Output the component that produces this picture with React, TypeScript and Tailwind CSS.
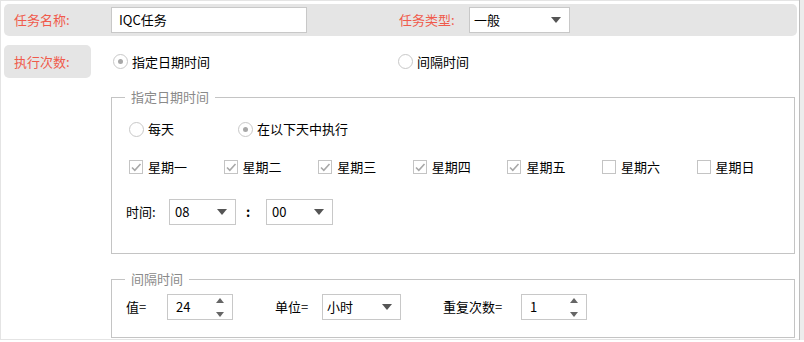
import React from "react";

const font = { fontFamily: '"Noto Sans CJK SC", "Noto Sans", sans-serif' };

function Caret() {
  return (
    <svg width="10" height="6" viewBox="0 0 10 6" className="shrink-0">
      <path d="M0 0h10L5 6z" fill="#555" />
    </svg>
  );
}

function Select({ value, w, pl = "pl-[4px]" }: { value: string; w: string; pl?: string }) {
  return (
    <div className={`${w} h-[26px] border border-[#c8c8c8] bg-white flex items-center justify-between ${pl} pr-[8px] text-black`}>
      <span>{value}</span>
      <Caret />
    </div>
  );
}

function Spinner({ value, w }: { value: string; w: string }) {
  return (
    <div className={`${w} h-[26px] border border-[#c8c8c8] bg-white flex items-center justify-between pl-[8px] pr-[8px] text-black`}>
      <span>{value}</span>
      <div className="flex flex-col gap-[9px]">
        <svg width="8" height="5" viewBox="0 0 8 5">
          <path d="M0 5h8L4 0z" fill="#666" />
        </svg>
        <svg width="8" height="5" viewBox="0 0 8 5">
          <path d="M0 0h8L4 5z" fill="#666" />
        </svg>
      </div>
    </div>
  );
}

function Radio({ label, checked }: { label: string; checked?: boolean }) {
  return (
    <div className="flex items-center gap-[4px]">
      <div className="w-[15px] h-[15px] rounded-full border border-[#c8c8c8] bg-white flex items-center justify-center">
        {checked && <div className="w-[5px] h-[5px] rounded-full bg-[#a8a8a8]" />}
      </div>
      <span className="text-black">{label}</span>
    </div>
  );
}

function Check({ label, checked }: { label: string; checked?: boolean }) {
  return (
    <div className="w-[94.6px] flex items-center gap-[5px]">
      <div className="w-[14px] h-[14px] border border-[#c4c4c4] bg-white flex items-center justify-center">
        {checked && (
          <svg width="12" height="12" viewBox="0 0 12 12">
            <path d="M2 6.5l2.8 2.8L10.5 3" fill="none" stroke="#a8a8a8" strokeWidth="1.6" />
          </svg>
        )}
      </div>
      <span className="text-black">{label}</span>
    </div>
  );
}

export default function App() {
  const days = [
    { label: "星期一", checked: true },
    { label: "星期二", checked: true },
    { label: "星期三", checked: true },
    { label: "星期四", checked: true },
    { label: "星期五", checked: true },
    { label: "星期六", checked: false },
    { label: "星期日", checked: false },
  ];

  return (
    <div className="w-[804px] h-[342px] bg-white flex items-start text-[13px] leading-[18px]" style={font}>
      <div className="w-[799px] h-[340px] border-l border-t border-b border-[#e4e4e4] pl-[3px] pr-[2px] flex flex-col">
        {/* row 1 */}
        <div className="mt-[3px] h-[32px] rounded-[5px] bg-[#e5e5e5] flex items-center pl-[10px]">
          <span className="w-[97px] text-[#f05a4b]">任务名称:</span>
          <div className="w-[196px] h-[26px] border border-[#c8c8c8] bg-white flex items-center pl-[7px] text-black">IQC任务</div>
          <span className="ml-[92px] w-[70px] text-[#f05a4b]">任务类型:</span>
          <Select value="一般" w="w-[101px]" />
        </div>

        {/* row 2 */}
        <div className="mt-[9px] flex items-center">
          <div className="w-[87px] h-[33px] rounded-[5px] bg-[#e5e5e5] flex items-center pl-[10px] text-[#f05a4b]">执行次数:</div>
          <div className="ml-[22px] w-[285px]">
            <Radio label="指定日期时间" checked />
          </div>
          <Radio label="间隔时间" />
        </div>

        {/* 指定日期时间 */}
        <fieldset className="mt-[10px] ml-[107px] w-[684px] border border-[#c4c4c4]">
          <legend className="ml-[13px] px-[6px] text-[#8a8a8a]">指定日期时间</legend>
          <div className="pl-[17px] pb-[28px]">
            <div className="mt-[14px] flex items-center">
              <div className="w-[109px]">
                <Radio label="每天" />
              </div>
              <Radio label="在以下天中执行" checked />
            </div>
            <div className="mt-[20px] flex items-center">
              {days.map((d) => (
                <Check key={d.label} label={d.label} checked={d.checked} />
              ))}
            </div>
            <div className="mt-[23px] -ml-[3px] flex items-center">
              <span className="w-[43px] text-black">时间:</span>
              <Select value="08" w="w-[67px]" pl="pl-[5px]" />
              <span className="w-[30px] pl-[10px] text-black font-bold">:</span>
              <Select value="00" w="w-[67px]" pl="pl-[5px]" />
            </div>
          </div>
        </fieldset>

        {/* 间隔时间 */}
        <fieldset className="mt-[16px] ml-[107px] w-[684px] border border-[#c4c4c4]">
          <legend className="ml-[13px] px-[6px] text-[#8a8a8a]">间隔时间</legend>
          <div className="pl-[14px] pb-[17px] mt-[6px] flex items-center">
            <span className="w-[41px] text-black">值=</span>
            <Spinner value="24" w="w-[66px]" />
            <span className="ml-[42px] w-[47px] text-black">单位=</span>
            <Select value="小时" w="w-[79px]" />
            <span className="ml-[42px] w-[78px] text-black">重复次数=</span>
            <Spinner value="1" w="w-[66px]" />
          </div>
        </fieldset>
      </div>
      <div className="w-[5px] h-[340px] border-l border-[#bdbdbd] bg-[#ececec]" />
    </div>
  );
}
